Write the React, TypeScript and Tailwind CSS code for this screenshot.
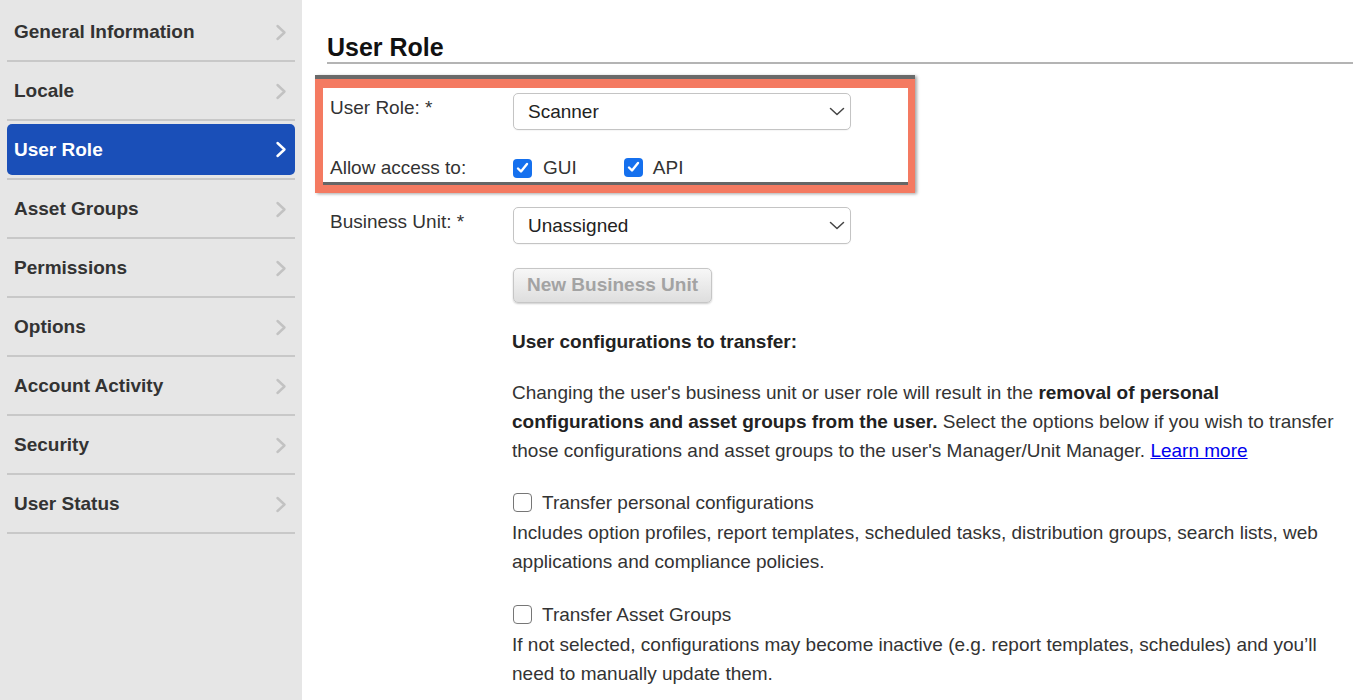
import React from "react";

const items = [
  "General Information",
  "Locale",
  "User Role",
  "Asset Groups",
  "Permissions",
  "Options",
  "Account Activity",
  "Security",
  "User Status",
];

function Chevron({ color }: { color: string }) {
  return (
    <svg width="12" height="17" viewBox="0 0 12 17" fill="none">
      <path d="M2.5 2 L9.5 8.5 L2.5 15" stroke={color} strokeWidth="2.4" strokeLinecap="round" strokeLinejoin="round" />
    </svg>
  );
}

function SelectBox({ value }: { value: string }) {
  return (
    <div className="w-[338px] h-[37px] border border-[#c4c4c4] rounded-[5px] bg-white flex items-center justify-between pl-[14px] pr-[5px] text-[19px] text-[#222] shadow-[0_1px_1px_rgba(0,0,0,0.04)]">
      <span className="pt-[2px]">{value}</span>
      <svg width="16" height="9" viewBox="0 0 16 9" fill="none">
        <path d="M1.5 1.5 L8 7.5 L14.5 1.5" stroke="#444" strokeWidth="1.5" strokeLinecap="round" strokeLinejoin="round" />
      </svg>
    </div>
  );
}

function Checked() {
  return (
    <span className="inline-flex w-[19px] h-[19px] rounded-[4px] bg-[#1570ee] items-center justify-center">
      <svg width="13" height="12" viewBox="0 0 13 12" fill="none">
        <path d="M2 6.5 L5 9.5 L11 2" stroke="white" strokeWidth="2.4" strokeLinecap="round" strokeLinejoin="round" />
      </svg>
    </span>
  );
}

function Unchecked() {
  return <span className="inline-block w-[19px] h-[19px] rounded-[4px] border border-[#767676] bg-white" />;
}

export default function App() {
  return (
    <div className="flex w-full h-[700px] overflow-hidden bg-white text-[#333] font-['Liberation_Sans',Arial,sans-serif]">
      <aside className="w-[302px] shrink-0 bg-[#e6e6e6] px-[7px] pt-[3px]">
        {items.map((label) => {
          const active = label === "User Role";
          return (
            <div key={label} className="h-[59px] border-b-2 border-[#c8c8c8] flex">
              {active ? (
                <div className="mt-[3px] h-[51px] w-full bg-[#1a4fb8] rounded-[5px] flex items-center justify-between pl-[7px] pr-[8px]">
                  <span className="text-[19px] font-bold text-white pt-[2px]">{label}</span>
                  <Chevron color="#ffffff" />
                </div>
              ) : (
                <div className="w-full flex items-center justify-between pl-[7px] pr-[8px] pt-[2px]">
                  <span className="text-[19px] font-bold text-[#333]">{label}</span>
                  <Chevron color="#c2c2c2" />
                </div>
              )}
            </div>
          );
        })}
      </aside>

      <main className="flex-1 pl-[13px] pr-[19px]">
        <h1 className="ml-[12px] pt-[33px] text-[25px] leading-[29px] font-bold text-[#111] border-b-2 border-[#b4b4b4]">
          User Role
        </h1>

        <div className="mt-[11px] w-[600px] shadow-[2px_1px_3px_rgba(0,0,0,0.35)]">
          <div className="h-[4px] bg-[#6a6a6a]" />
          <div className="bg-[#f47a61] pt-[9px] pl-[8px] pr-[7px] pb-[8px]">
            <div className="bg-white border-b-[3px] border-[#666] pl-[7px] pt-[5px] pb-[3px]">
              <div className="flex items-start">
                <div className="w-[183px] mt-[4px] text-[19px] leading-[22px]">User Role: *</div>
                <SelectBox value="Scanner" />
              </div>
              <div className="flex items-center mt-[27px] h-[22px]">
                <div className="w-[183px] text-[19px] leading-[22px]">Allow access to:</div>
                <Checked />
                <span className="ml-[11px] text-[19px] leading-[22px]">GUI</span>
                <span className="ml-[47px]">
                  <Checked />
                </span>
                <span className="ml-[10px] text-[19px] leading-[22px]">API</span>
              </div>
            </div>
          </div>
        </div>

        <div className="pl-[15px]">
          <div className="flex items-start mt-[14px]">
            <div className="w-[183px] mt-[4px] text-[19px] leading-[22px]">Business Unit: *</div>
            <SelectBox value="Unassigned" />
          </div>

          <div className="ml-[182px]">
            <button className="ml-[1px] mt-[24px] h-[35px] w-[199px] rounded-[5px] border border-[#c6c6c6] bg-gradient-to-b from-[#f7f7f7] to-[#dedede] text-[19px] font-bold text-[#a3a3a3] shadow-[0_1px_2px_rgba(0,0,0,0.2)]">
              New Business Unit
            </button>

            <div className="w-[841px] text-[19px] leading-[29px]">
              <div className="mt-[24px] font-bold text-[#222]">User configurations to transfer:</div>

              <p className="mt-[22px]">
                Changing the user's business unit or user role will result in the{" "}
                <b className="text-[#222]">removal of personal configurations and asset groups from the user.</b> Select the options
                below if you wish to transfer those configurations and asset groups to the user's Manager/Unit Manager.{" "}
                <a className="text-[#0000ee] underline" href="#">
                  Learn more
                </a>
              </p>

              <div className="mt-[22px] h-[31px] flex items-center">
                <span className="ml-[1px] flex">
                  <Unchecked />
                </span>
                <span className="ml-[10px] leading-[31px]">Transfer personal configurations</span>
              </div>
              <p>
                Includes option profiles, report templates, scheduled tasks, distribution groups, search lists, web applications and
                compliance policies.
              </p>

              <div className="mt-[23px] h-[31px] flex items-center">
                <span className="ml-[1px] flex">
                  <Unchecked />
                </span>
                <span className="ml-[10px] leading-[31px]">Transfer Asset Groups</span>
              </div>
              <p>
                If not selected, configurations may become inactive (e.g. report templates, schedules) and you’ll need to manually
                update them.
              </p>
            </div>
          </div>
        </div>
      </main>
    </div>
  );
}
